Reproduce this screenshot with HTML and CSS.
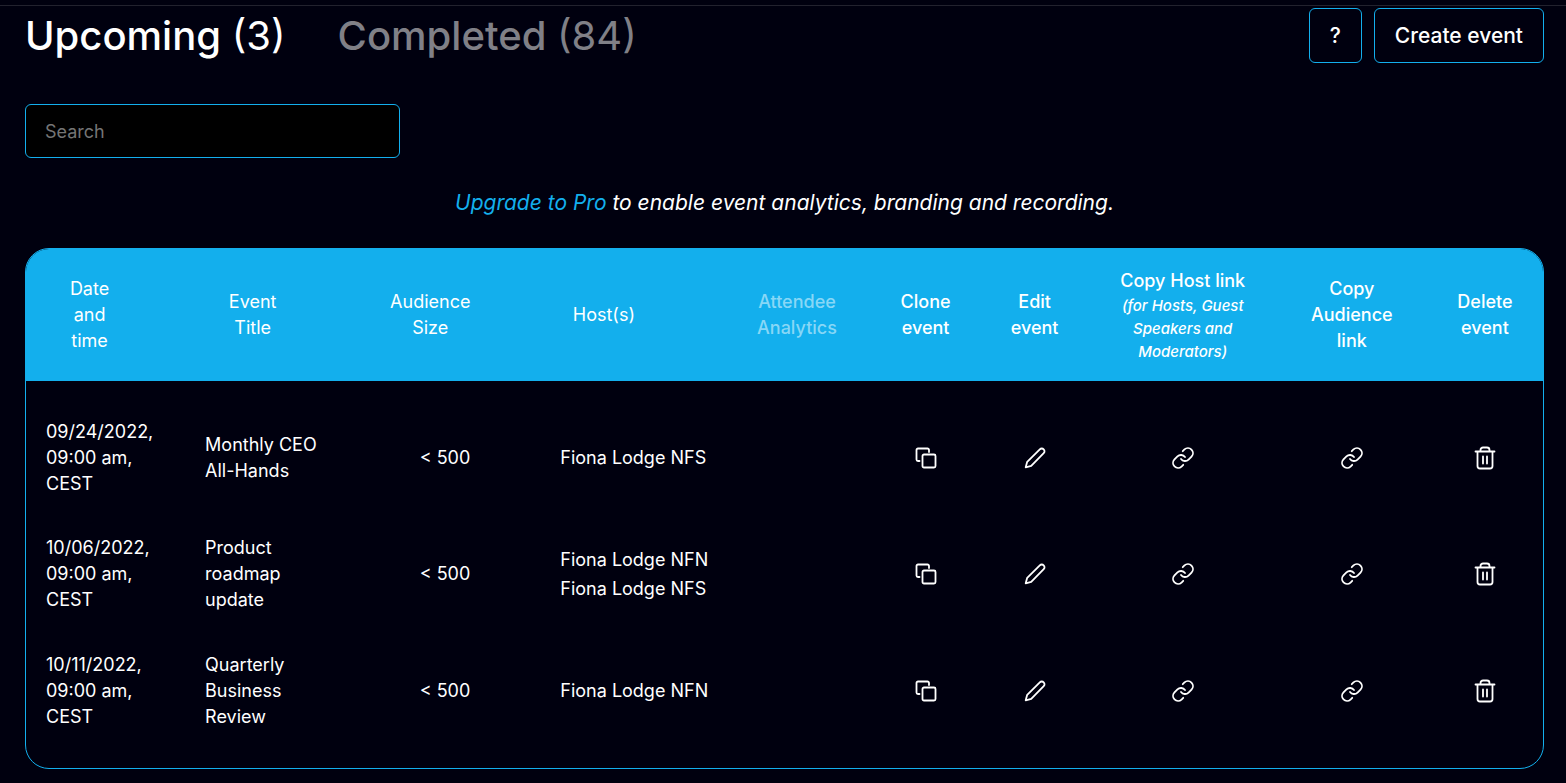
FILE: index.html
```html
<!DOCTYPE html>
<html lang="en">
<head>
<meta charset="UTF-8">
<meta name="viewport" content="width=device-width, initial-scale=1">
<title>Events</title>
<link rel="stylesheet" href="styles.css">
</head>
<body>
<!-- icons, reused in every row -->
<svg class="sprite" aria-hidden="true">
  <symbol id="clone" viewBox="0 0 24 24">
    <path d="M15 6V4a1.500 1.500 0 0 0-1.500-1.500H4A1.500 1.500 0 0 0 2.500 4v9.500a1.500 1.500 0 0 0 1.500 1.500h1.500"/>
    <rect x="8.500" y="8.500" width="13" height="13" rx="1.500"/>
  </symbol>
  <symbol id="edit" viewBox="0 0 24 24">
    <path d="M2.700 21.300l1.500-5.500L16.800 3.300a2.700 2.700 0 0 1 3.900 3.900L8.200 19.800z"/>
  </symbol>
  <symbol id="link" viewBox="0 0 24 24">
    <path d="M10 13a5 5 0 0 0 7.540.540l3-3a5 5 0 0 0-7.070-7.070l-1.720 1.710"/>
    <path d="M14 11a5 5 0 0 0-7.540-.540l-3 3a5 5 0 0 0 7.070 7.070l1.710-1.710"/>
  </symbol>
  <symbol id="trash" viewBox="0 0 24 24">
    <path d="M2.500 5.500h19M4.500 5.500V20a2.500 2.500 0 0 0 2.500 2.500h10a2.500 2.500 0 0 0 2.500-2.500V5.500M7.500 5.500V4A2.500 2.500 0 0 1 10 1.500h4A2.500 2.500 0 0 1 16.500 4v1.500M10 10.500v7M14 10.500v7"/>
  </symbol>
</svg>

<main class="page">
  <header class="topbar">
    <nav class="tabs">
      <button type="button" class="tab active">Upcoming <span>(3)</span></button>
      <button type="button" class="tab">Completed <span>(84)</span></button>
    </nav>
    <div class="actions">
      <button type="button" class="btn">?</button>
      <button type="button" class="btn">Create event</button>
    </div>
  </header>

  <input type="search" class="search" placeholder="Search" aria-label="Search">

  <p class="upgrade"><a href="#">Upgrade to Pro</a> to enable event analytics, branding and recording.</p>

  <div class="events">
    <table>
      <colgroup>
        <col class="col-date">
        <col class="col-title">
        <col class="col-size">
        <col class="col-hosts">
        <col class="col-analytics">
        <col class="col-clone">
        <col class="col-edit">
        <col class="col-host-link">
        <col class="col-audience-link">
        <col class="col-delete">
      </colgroup>
      <thead>
        <tr>
          <th>Date<br>and<br>time</th>
          <th>Event<br>Title</th>
          <th>Audience<br>Size</th>
          <th>Host(s)</th>
          <th class="strong disabled">Attendee<br>Analytics</th>
          <th class="strong">Clone<br>event</th>
          <th class="strong">Edit<br>event</th>
          <th class="strong">Copy Host link <em>(for Hosts, Guest<br>Speakers and<br>Moderators)</em></th>
          <th class="strong">Copy<br>Audience<br>link</th>
          <th class="strong">Delete<br>event</th>
        </tr>
      </thead>
      <tbody>
        <tr>
          <td class="date">09/24/2022,<br>09:00 am,<br>CEST</td>
          <td class="title">Monthly CEO<br>All-Hands</td>
          <td class="size">&lt; 500</td>
          <td class="hosts"><div>Fiona Lodge NFS</div></td>
          <td></td>
          <td><button type="button" class="icon" aria-label="Clone event"><svg><use href="#clone"/></svg></button></td>
          <td><button type="button" class="icon" aria-label="Edit event"><svg><use href="#edit"/></svg></button></td>
          <td><button type="button" class="icon" aria-label="Copy Host link"><svg><use href="#link"/></svg></button></td>
          <td><button type="button" class="icon" aria-label="Copy Audience link"><svg><use href="#link"/></svg></button></td>
          <td><button type="button" class="icon" aria-label="Delete event"><svg><use href="#trash"/></svg></button></td>
        </tr>
        <tr>
          <td class="date">10/06/2022,<br>09:00 am,<br>CEST</td>
          <td class="title">Product<br>roadmap<br>update</td>
          <td class="size">&lt; 500</td>
          <td class="hosts"><div>Fiona Lodge NFN</div><div>Fiona Lodge NFS</div></td>
          <td></td>
          <td><button type="button" class="icon" aria-label="Clone event"><svg><use href="#clone"/></svg></button></td>
          <td><button type="button" class="icon" aria-label="Edit event"><svg><use href="#edit"/></svg></button></td>
          <td><button type="button" class="icon" aria-label="Copy Host link"><svg><use href="#link"/></svg></button></td>
          <td><button type="button" class="icon" aria-label="Copy Audience link"><svg><use href="#link"/></svg></button></td>
          <td><button type="button" class="icon" aria-label="Delete event"><svg><use href="#trash"/></svg></button></td>
        </tr>
        <tr>
          <td class="date">10/11/2022,<br>09:00 am,<br>CEST</td>
          <td class="title">Quarterly<br>Business<br>Review</td>
          <td class="size">&lt; 500</td>
          <td class="hosts"><div>Fiona Lodge NFN</div></td>
          <td></td>
          <td><button type="button" class="icon" aria-label="Clone event"><svg><use href="#clone"/></svg></button></td>
          <td><button type="button" class="icon" aria-label="Edit event"><svg><use href="#edit"/></svg></button></td>
          <td><button type="button" class="icon" aria-label="Copy Host link"><svg><use href="#link"/></svg></button></td>
          <td><button type="button" class="icon" aria-label="Copy Audience link"><svg><use href="#link"/></svg></button></td>
          <td><button type="button" class="icon" aria-label="Delete event"><svg><use href="#trash"/></svg></button></td>
        </tr>
      </tbody>
    </table>
  </div>
</main>
</body>
</html>
```
FILE: styles.css
```css
:root {
  --bg: #00000f;
  --blue: #13afed;
  --line: #22222e;
  --muted: #808087;
}

* {
  box-sizing: border-box;
}

body {
  margin: 0;
  padding-top: 5px;
  background: var(--bg);
  color: #fff;
  font-family: Inter, sans-serif;
  font-size: 18px;
  line-height: 26px;
}

button, input {
  font: inherit;
  color: inherit;
}

button {
  background: none;
  border: none;
  cursor: pointer;
}

.sprite {
  display: none;
}

.page {
  border-top: 1px solid var(--line);
  padding: 2px 22px 14px 25px;
}

/* tabs and buttons */
.topbar {
  display: flex;
  justify-content: space-between;
  align-items: center;
}

.tabs {
  display: flex;
  gap: 52px;
}

.tab {
  padding: 0;
  font-size: 40px;
  line-height: 55px;
  font-weight: 500;
  color: var(--muted);
}

.tab span {
  font-weight: 400;
}

.tab.active {
  color: #fff;
}

.actions {
  display: flex;
  gap: 12px;
}

.btn {
  height: 55px;
  padding: 0 20px;
  border: 1px solid var(--blue);
  border-radius: 6px;
  font-size: 21px;
  font-weight: 500;
}

.search {
  display: block;
  width: 375px;
  max-width: 100%;
  height: 54px;
  margin-top: 41px;
  padding: 0 19px;
  border: 1px solid var(--blue);
  border-radius: 6px;
  background: #000;
  appearance: none;
}

.search::placeholder {
  color: #757575;
}

.upgrade {
  margin: 32px 0;
  font-size: 21px;
  font-style: italic;
  text-align: center;
}

.upgrade a {
  color: var(--blue);
  text-decoration: none;
}

/* events table */
.events {
  border: 1px solid var(--blue);
  border-radius: 24px;
  overflow: hidden;
}

table {
  width: 100%;
  table-layout: fixed;
  border-collapse: collapse;
}

.col-date { width: 127px; }
.col-title { width: 199px; }
.col-size { width: 156px; }
.col-hosts { width: 191px; }
.col-analytics { width: 171px; }
.col-clone { width: 110px; }
.col-edit { width: 108px; }
.col-host-link { width: 188px; }
.col-audience-link { width: 150px; }
.col-delete { width: 116px; }

th {
  height: 132px;
  padding: 0;
  background: var(--blue);
  font-weight: 400;
}

th.strong {
  font-weight: 500;
}

th.disabled {
  padding-left: 24px;
  color: #88d7f6;
}

th em {
  display: block;
  font-size: 15px;
  line-height: 23px;
}

td {
  padding: 19px 0;
  text-align: center;
}

tbody tr:first-child td {
  padding-top: 38px;
}

tbody tr:last-child td {
  padding-top: 20px;
  padding-bottom: 38px;
}

td.date {
  padding-left: 20px;
  text-align: left;
}

td.title, td.hosts {
  padding-left: 52px;
  text-align: left;
  white-space: nowrap;
}

td.size {
  padding-right: 38px;
  text-align: right;
}

.hosts div + div {
  margin-top: 3px;
}

.icon {
  display: flex;
  margin: 0 auto;
  padding: 0;
}

.icon svg {
  width: 24px;
  height: 24px;
  fill: none;
  stroke: #fff;
  stroke-width: 1.8;
  stroke-linecap: round;
  stroke-linejoin: round;
}
```
